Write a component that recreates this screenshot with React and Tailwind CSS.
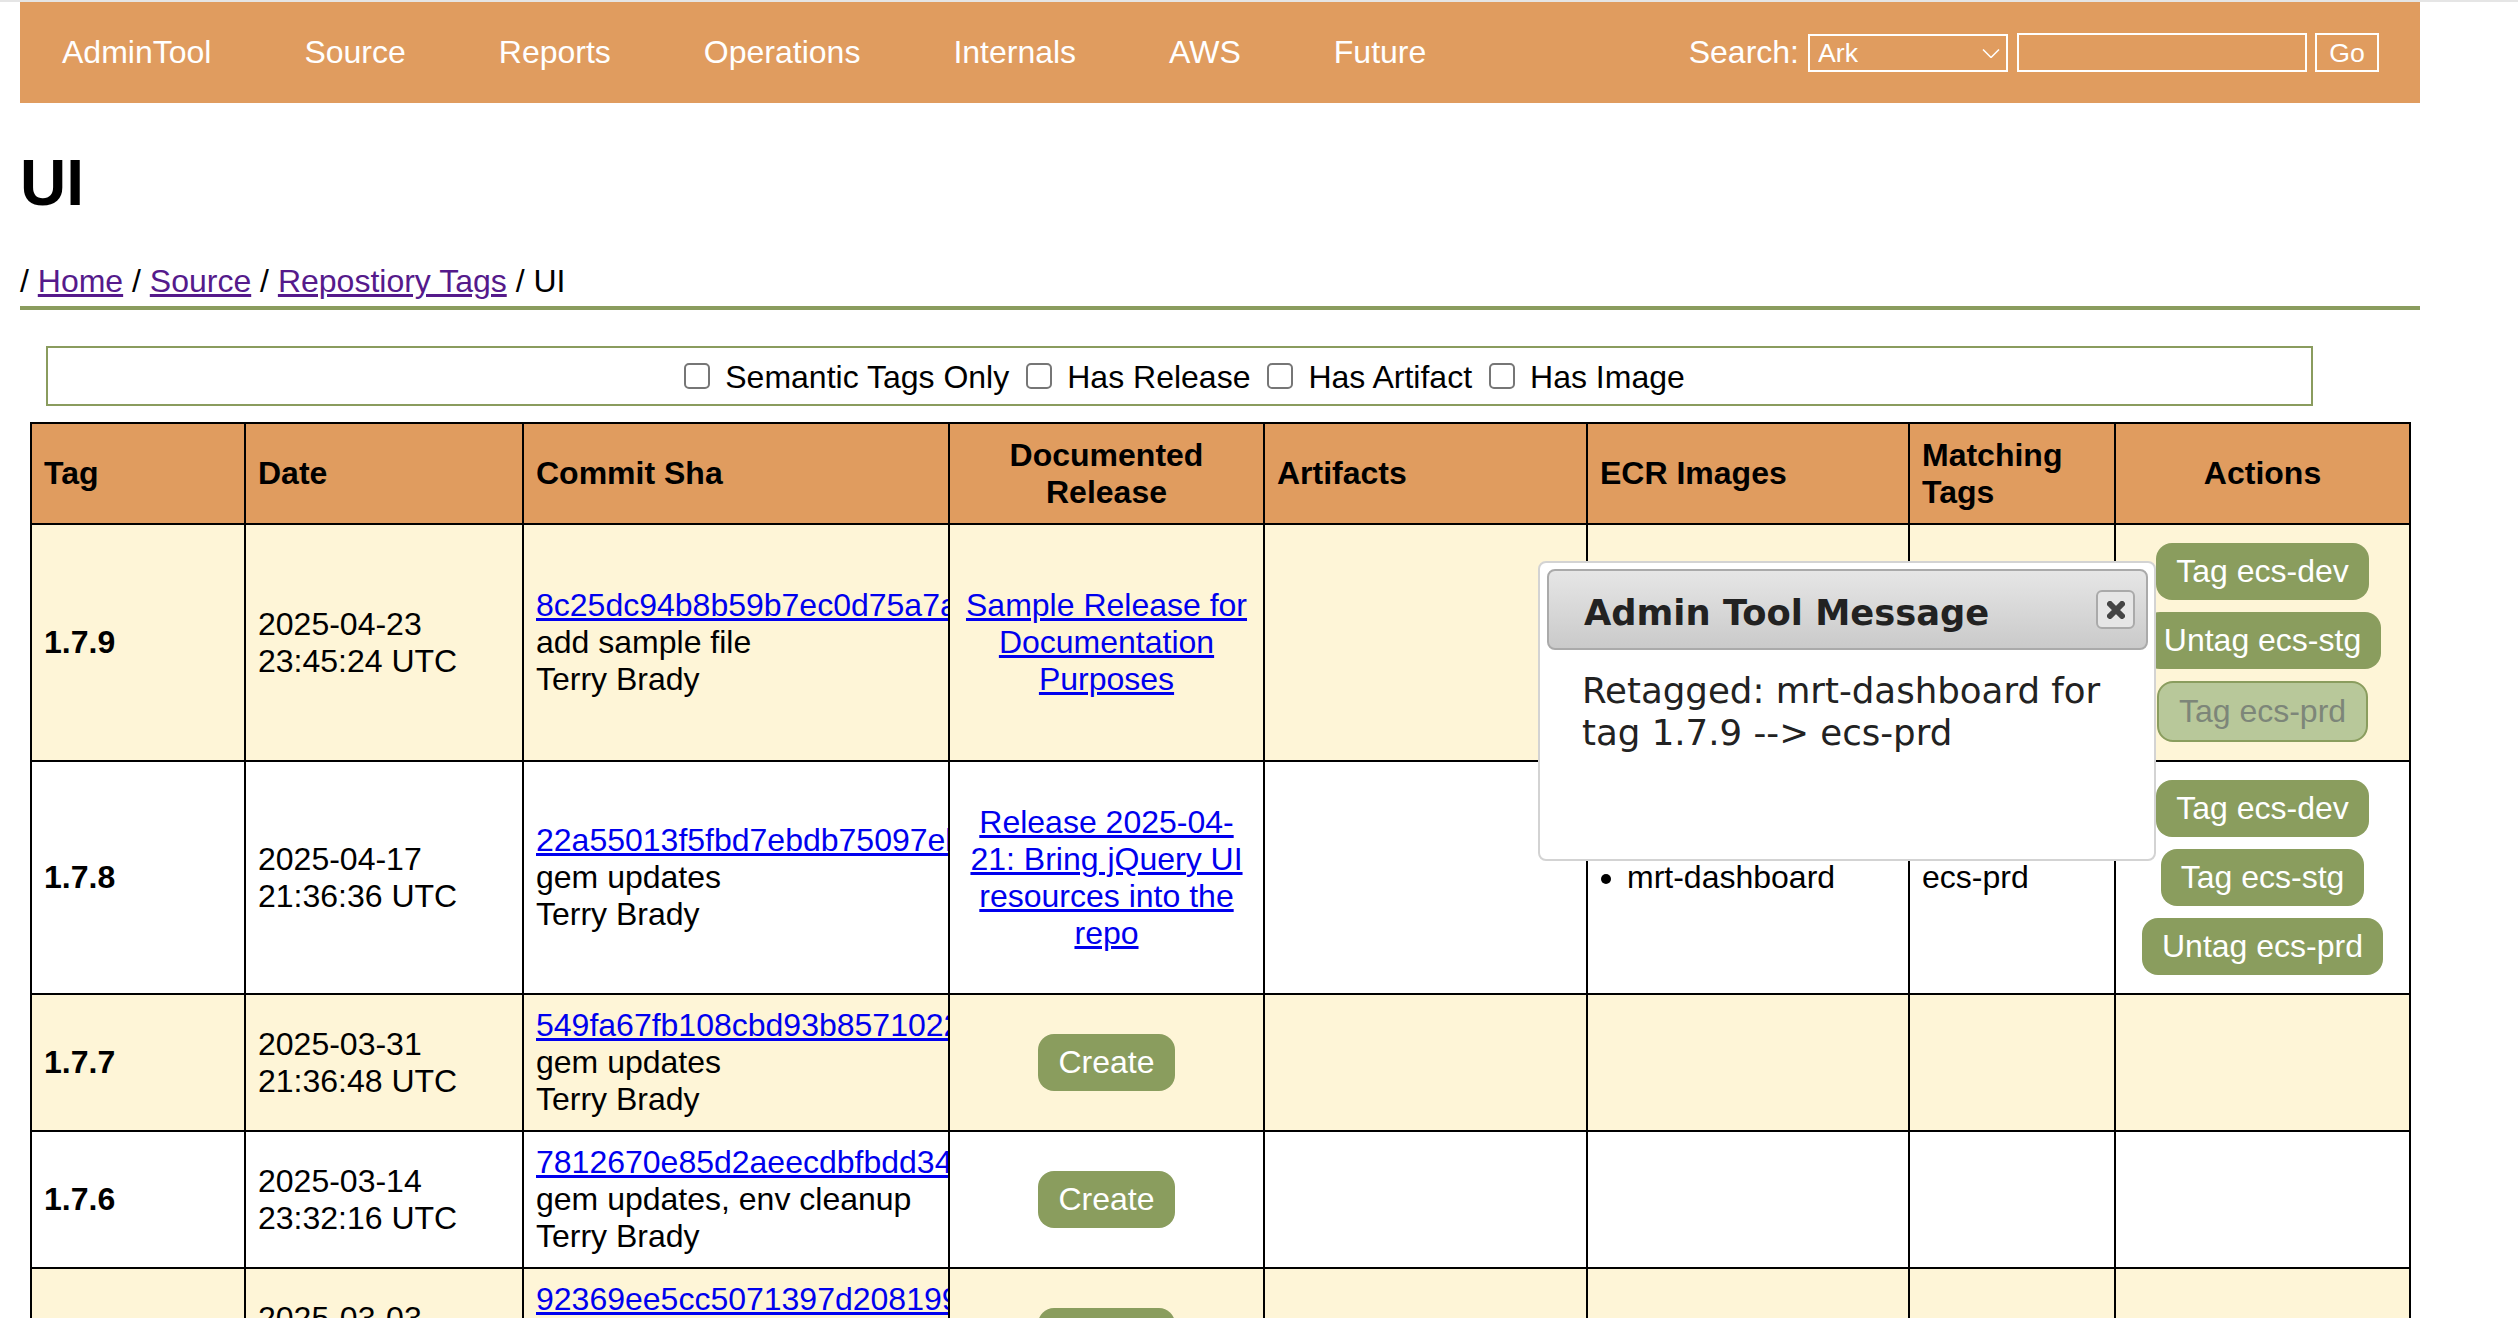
import React from "react";

const navItems = ["AdminTool", "Source", "Reports", "Operations", "Internals", "AWS", "Future"];
const filters = ["Semantic Tags Only", "Has Release", "Has Artifact", "Has Image"];
const colWidths = ["w-[214px]", "w-[278px]", "w-[426px]", "w-[315px]", "w-[323px]", "w-[322px]", "w-[206px]", "w-[295px]"];

const rows = [
  {
    tag: "1.7.9", d: "2025-04-23", t: "23:45:24 UTC", sha: "8c25dc94b8b59b7ec0d75a7a1c2e", msg: "add sample file",
    release: ["Sample Release for Documentation Purposes"], images: ["mrt-dashboard"], match: "ecs-stg",
    actions: [["Tag ecs-dev"], ["Untag ecs-stg"], ["Tag ecs-prd", true]],
  },
  {
    tag: "1.7.8", d: "2025-04-17", t: "21:36:36 UTC", sha: "22a55013f5fbd7ebdb75097eb1d0", msg: "gem updates",
    release: ["Release 2025-04-21: Bring jQuery UI resources into the repo"], images: ["mrt-dashboard"], match: "ecs-prd",
    actions: [["Tag ecs-dev"], ["Tag ecs-stg"], ["Untag ecs-prd"]],
  },
  { tag: "1.7.7", d: "2025-03-31", t: "21:36:48 UTC", sha: "549fa67fb108cbd93b8571022a1c", msg: "gem updates" },
  { tag: "1.7.6", d: "2025-03-14", t: "23:32:16 UTC", sha: "7812670e85d2aeecdbfbdd34a9e1", msg: "gem updates, env cleanup" },
  { tag: "1.7.5", d: "2025-03-03", t: "21:36:48 UTC", sha: "92369ee5cc5071397d2081994f3b", msg: "gem updates" },
];

const cell = "border-2 border-black px-[12px] py-[12px] align-middle overflow-hidden";
const head = "border-2 border-black bg-[#e09c5f] px-[12px] py-[12.5px] align-middle font-bold";

function Btn({ children, disabled }) {
  return disabled ? (
    <button className="rounded-[16px] border-2 border-[#8a9d5e] bg-[#b8c89a] px-[20px] py-[10px] text-[#7d8679]">{children}</button>
  ) : (
    <button className="rounded-[16px] bg-[#8a9d5e] px-[20px] py-[10px] text-white">{children}</button>
  );
}

export default function App() {
  return (
    <div className="h-[1318px] overflow-hidden bg-white font-['Liberation_Sans',Arial,sans-serif] text-[32px] leading-[37px] text-black">
      <div className="h-[2px] bg-[#e5e5e5]" />
      <div className="ml-[20px] w-[2400px]">
        <nav className="flex h-[101px] items-center justify-between bg-[#e09c5f] pl-[42px] pr-[41px] text-white">
          <div className="flex gap-[93px]">
            {navItems.map((n) => (
              <span key={n}>{n}</span>
            ))}
          </div>
          <div className="flex items-center text-[26.67px]">
            <span className="mr-[9px] text-[32px]">Search:</span>
            <div className="relative mr-[9px]">
              <select className="block h-[38px] w-[200px] appearance-none rounded-none border-2 border-white bg-transparent pl-[8px] leading-[30px] text-white">
                <option>Ark</option>
              </select>
              <svg className="absolute right-[8px] top-[15px] h-[9px] w-[18px]" viewBox="0 0 18 9" fill="none" stroke="white" strokeWidth="1.5">
                <path d="M1 0.5 L9 8.5 L17 0.5" />
              </svg>
            </div>
            <input className="mr-[8px] h-[39px] w-[290px] border-2 border-white bg-transparent" />
            <button className="h-[39px] w-[64px] border-2 border-white text-white">Go</button>
          </div>
        </nav>

        <h1 className="mt-[43px] text-[64px] font-bold leading-[74px]">UI</h1>

        <div className="mt-[43px] h-[47px] border-b-4 border-[#8a9c5e]">
          /{" "}
          <a href="#" className="text-[#551a8b] underline">Home</a> /{" "}
          <a href="#" className="text-[#551a8b] underline">Source</a> /{" "}
          <a href="#" className="text-[#551a8b] underline">Repostiory Tags</a> / UI
        </div>

        <div className="ml-[26px] mt-[36px] flex h-[60px] w-[2267px] items-center justify-center border-2 border-[#8a9c5e] pl-[10px]">
          {filters.map((f) => (
            <label key={f} className="mr-[17px] flex items-center last:mr-0">
              <input type="checkbox" className="mr-[15px] h-[26px] w-[26px] appearance-none rounded-[5px] border-2 border-[#767676] bg-white" />
              <span className="pt-[2px]">{f}</span>
            </label>
          ))}
        </div>

        <div className="relative">
          <table className="ml-[10px] mt-[16px] w-[2379px] table-fixed border-collapse">
            <colgroup>
              {colWidths.map((w, i) => (
                <col key={i} className={w} />
              ))}
            </colgroup>
            <thead>
              <tr>
                <th className={head + " text-left"}>Tag</th>
                <th className={head + " text-left"}>Date</th>
                <th className={head + " text-left"}>Commit Sha</th>
                <th className={head + " text-center"}>Documented Release</th>
                <th className={head + " text-left"}>Artifacts</th>
                <th className={head + " text-left"}>ECR Images</th>
                <th className={head + " text-left"}>Matching Tags</th>
                <th className={head + " text-center"}>Actions</th>
              </tr>
            </thead>
            <tbody>
              {rows.map((r, i) => (
                <tr key={r.tag} className={i % 2 === 0 ? "bg-[#fef5d7]" : "bg-white"}>
                  <td className={cell + " font-bold"}>{r.tag}</td>
                  <td className={cell}>
                    {r.d}
                    <br />
                    {r.t}
                  </td>
                  <td className={cell + " whitespace-nowrap"}>
                    <a href="#" className="text-[#0000ee] underline">{r.sha}</a>
                    <br />
                    {r.msg}
                    <br />
                    Terry Brady
                  </td>
                  <td className={cell + " text-center"}>
                    {r.release ? (
                      <a href="#" className="text-[#0000ee] underline">{r.release[0]}</a>
                    ) : (
                      <Btn>Create</Btn>
                    )}
                  </td>
                  <td className={cell}></td>
                  <td className={cell}>
                    {r.images && (
                      <ul className="list-disc pl-[27px]">
                        {r.images.map((m) => (
                          <li key={m}>{m}</li>
                        ))}
                      </ul>
                    )}
                  </td>
                  <td className={cell}>{r.match}</td>
                  <td className={cell}>
                    {r.actions && (
                      <div className="flex flex-col items-center gap-[12px] py-[6px]">
                        {r.actions.map(([a, dis]) => (
                          <Btn key={a} disabled={dis}>{a}</Btn>
                        ))}
                      </div>
                    )}
                  </td>
                </tr>
              ))}
            </tbody>
          </table>

          <div className="absolute left-[1518px] top-[139px] h-[300px] w-[618px] rounded-[8px] border-2 border-[#d3d3d3] bg-white p-[6px] font-['DejaVu_Sans',Verdana,sans-serif] text-[#222222]">
            <div className="ml-[1px] flex h-[81px] items-center justify-between rounded-[8px] border-2 border-[#aaaaaa] bg-linear-to-b from-[#e6e6e6] to-[#cacaca] pl-[35px] pr-[11px]">
              <span className="pt-[5px] text-[35.3px] font-bold">Admin Tool Message</span>
              <button className="flex h-[39px] w-[39px] items-center justify-center rounded-[6px] border-2 border-[#aaaaaa] bg-[#e6e6e6]">
                <svg className="h-[18px] w-[18px]" viewBox="0 0 18 18" fill="none" stroke="#454545" strokeWidth="6" strokeLinecap="round">
                  <path d="M3 3 L15 15 M15 3 L3 15" />
                </svg>
              </button>
            </div>
            <div className="mt-[20px] px-[36px] text-[35.6px] leading-[42px]">Retagged: mrt-dashboard for tag 1.7.9 --&gt; ecs-prd</div>
          </div>
        </div>
      </div>
    </div>
  );
}
